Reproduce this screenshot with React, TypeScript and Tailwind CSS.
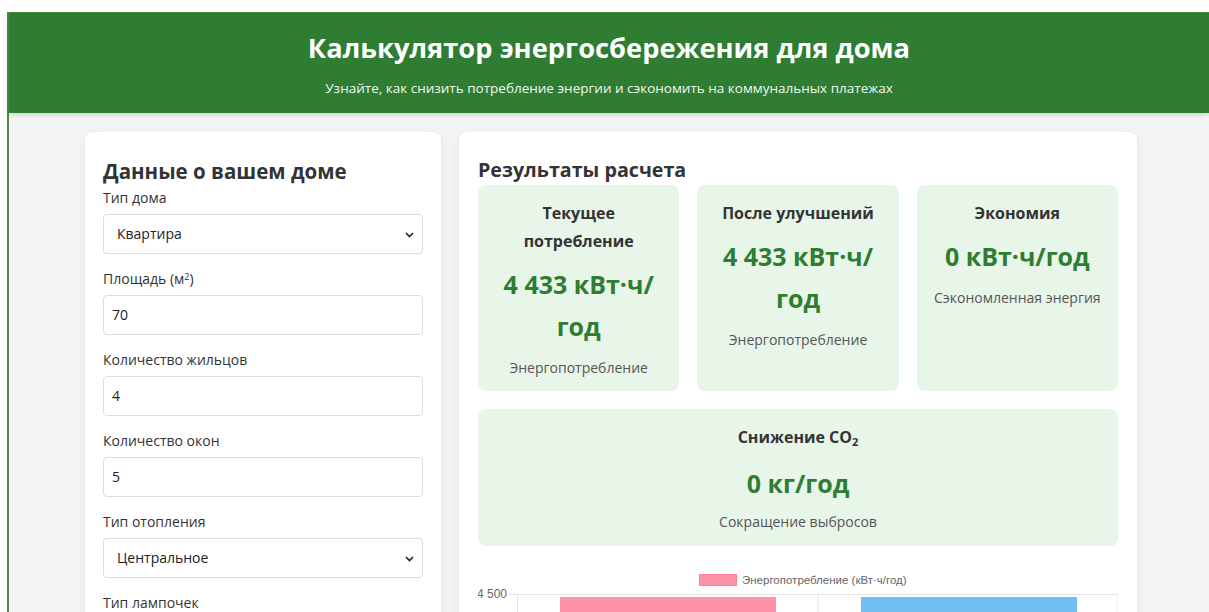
import React from "react";

type Field =
  | { kind: "select"; label: React.ReactNode; value: string }
  | { kind: "input"; label: React.ReactNode; value: string };

const fields: Field[] = [
  { kind: "select", label: "Тип дома", value: "Квартира" },
  {
    kind: "input",
    label: (
      <>
        Площадь (м<sup className="text-[9px] leading-none">2</sup>)
      </>
    ),
    value: "70",
  },
  { kind: "input", label: "Количество жильцов", value: "4" },
  { kind: "input", label: "Количество окон", value: "5" },
  { kind: "select", label: "Тип отопления", value: "Центральное" },
  { kind: "select", label: "Тип лампочек", value: "Светодиодные" },
];

function Chevron() {
  return (
    <svg width="9" height="6" viewBox="0 0 9 6" className="absolute right-[8px] top-[17px]">
      <path d="M1 1l3.5 3.5L8 1" fill="none" stroke="#222" strokeWidth="1.6" />
    </svg>
  );
}

function FormField({ f }: { f: Field }) {
  return (
    <div className="mb-[15px]">
      <div className="mb-[6px] text-[14px] leading-[20px] font-medium text-[#333]">{f.label}</div>
      {f.kind === "select" ? (
        <div className="relative h-[40px] rounded-[4px] border border-[#ddd] bg-white">
          <div className="pl-[13px] text-[14px] leading-[38px] text-[#222]">{f.value}</div>
          <Chevron />
        </div>
      ) : (
        <div className="h-[40px] rounded-[4px] border border-[#ddd] bg-white pl-[8px] text-[14px] leading-[38px] text-[#222]">
          {f.value}
        </div>
      )}
    </div>
  );
}

function StatCard({
  title,
  value,
  note,
}: {
  title: React.ReactNode;
  value: string;
  note: string;
}) {
  return (
    <div className="rounded-[8px] bg-[#e8f5e9] px-[15px] pt-[14px] pb-[13px] text-center">
      <div className="text-[16px] leading-[28px] font-bold text-[#333]">{title}</div>
      <div className="mt-[8px] text-[25px] leading-[42px] font-bold text-[#2e7d32]">{value}</div>
      <div className="mt-[11px] text-[14px] leading-[20px] text-[#555]">{note}</div>
    </div>
  );
}

const fmt = (n: number) => n.toLocaleString("ru-RU").replace(/\s/g, "\u00a0");

function EnergyChart() {
  const W = 640;
  const top = 30;
  const zero = 232.5;
  const max = 4500;
  const left = 39;
  const ticks = [4500, 4000, 3500, 3000, 2500, 2000, 1500, 1000, 500, 0];
  const y = (v: number) => zero - (v / max) * (zero - top);
  const bars = [
    { x: 82, v: 4433, fill: "#ff92a9" },
    { x: 383, v: 4433, fill: "#72bef1" },
  ];
  return (
    <svg width={W} height={270} className="block" fontFamily="'Liberation Sans', Arial, sans-serif">
      <rect x={221.5} y={10.5} width={37} height={11} fill="#ff92a9" stroke="#ff7f9b" />
      <text x={264} y={19.5} fontSize="11.5" fill="#666">
        Энергопотребление (кВт·ч/год)
      </text>
      {ticks.map((t) => (
        <g key={t}>
          <line x1={left - 8} x2={W} y1={y(t) + 0.5} y2={y(t) + 0.5} stroke="#e5e5e5" />
          <text x={29} y={y(t) + 4} fontSize="12" fill="#666" textAnchor="end">
            {fmt(t)}
          </text>
        </g>
      ))}
      {[left, 339.5, W - 0.5].map((x) => (
        <line key={x} x1={x + 0.5} x2={x + 0.5} y1={top} y2={zero + 8} stroke="#e5e5e5" />
      ))}
      {bars.map((b) => (
        <rect key={b.x} x={b.x} y={y(b.v)} width={216} height={zero - y(b.v)} fill={b.fill} />
      ))}
      <text x={190} y={zero + 22} fontSize="12" fill="#666" textAnchor="middle">
        До улучшений
      </text>
      <text x={491} y={zero + 22} fontSize="12" fill="#666" textAnchor="middle">
        После улучшений
      </text>
    </svg>
  );
}

export default function App() {
  return (
    <div className="h-[612px] overflow-hidden bg-white pl-[7px] pt-[12px] font-['Open_Sans','Noto_Sans',sans-serif]">
      <div className="min-h-[700px] border-t border-l-2 border-[#4a8c3f] bg-[#f4f4f4]">
        <header className="relative z-10 flex flex-col items-center bg-[#2e7d32] py-[15px] text-white shadow-[0_2px_5px_rgba(0,0,0,0.15)]">
          <h1 className="text-[27.3px] leading-[40px] font-bold">Калькулятор энергосбережения для дома</h1>
          <p className="mt-[10px] text-[13.5px] leading-[20px] text-[#f1f8f1]">
            Узнайте, как снизить потребление энергии и сэкономить на коммунальных платежах
          </p>
        </header>

        <main className="flex justify-center gap-[18px] pt-[19px] pl-[4px]">
          <section className="w-[356px] shrink-0 rounded-[8px] bg-white px-[18px] pt-[25px] shadow-[0_2px_10px_rgba(0,0,0,0.07)]">
            <h2 className="mb-[3px] text-[20.5px] leading-[28px] font-bold text-[#333]">Данные о вашем доме</h2>
            {fields.map((f, i) => (
              <FormField key={i} f={f} />
            ))}
          </section>

          <section className="w-[678px] shrink-0 rounded-[8px] bg-white px-[19px] pt-[23px] shadow-[0_2px_10px_rgba(0,0,0,0.07)]">
            <h2 className="text-[19.7px] leading-[30px] font-bold text-[#333]">Результаты расчета</h2>
            <div className="grid grid-cols-3 items-stretch gap-[18px]">
              <StatCard title="Текущее потребление" value="4 433 кВт·ч/год" note="Энергопотребление" />
              <StatCard title="После улучшений" value="4 433 кВт·ч/год" note="Энергопотребление" />
              <StatCard title="Экономия" value="0 кВт·ч/год" note="Сэкономленная энергия" />
              <div className="col-span-3 rounded-[8px] bg-[#e8f5e9] px-[15px] pt-[14px] pb-[14px] text-center">
                <div className="text-[16px] leading-[28px] font-bold text-[#333]">
                  Снижение CO<sub className="text-[11px] leading-none">2</sub>
                </div>
                <div className="mt-[11px] text-[25px] leading-[42px] font-bold text-[#2e7d32]">0 кг/год</div>
                <div className="mt-[8px] text-[14px] leading-[20px] text-[#555]">Сокращение выбросов</div>
              </div>
            </div>
            <div className="mt-[18px]">
              <EnergyChart />
            </div>
          </section>
        </main>
      </div>
    </div>
  );
}
